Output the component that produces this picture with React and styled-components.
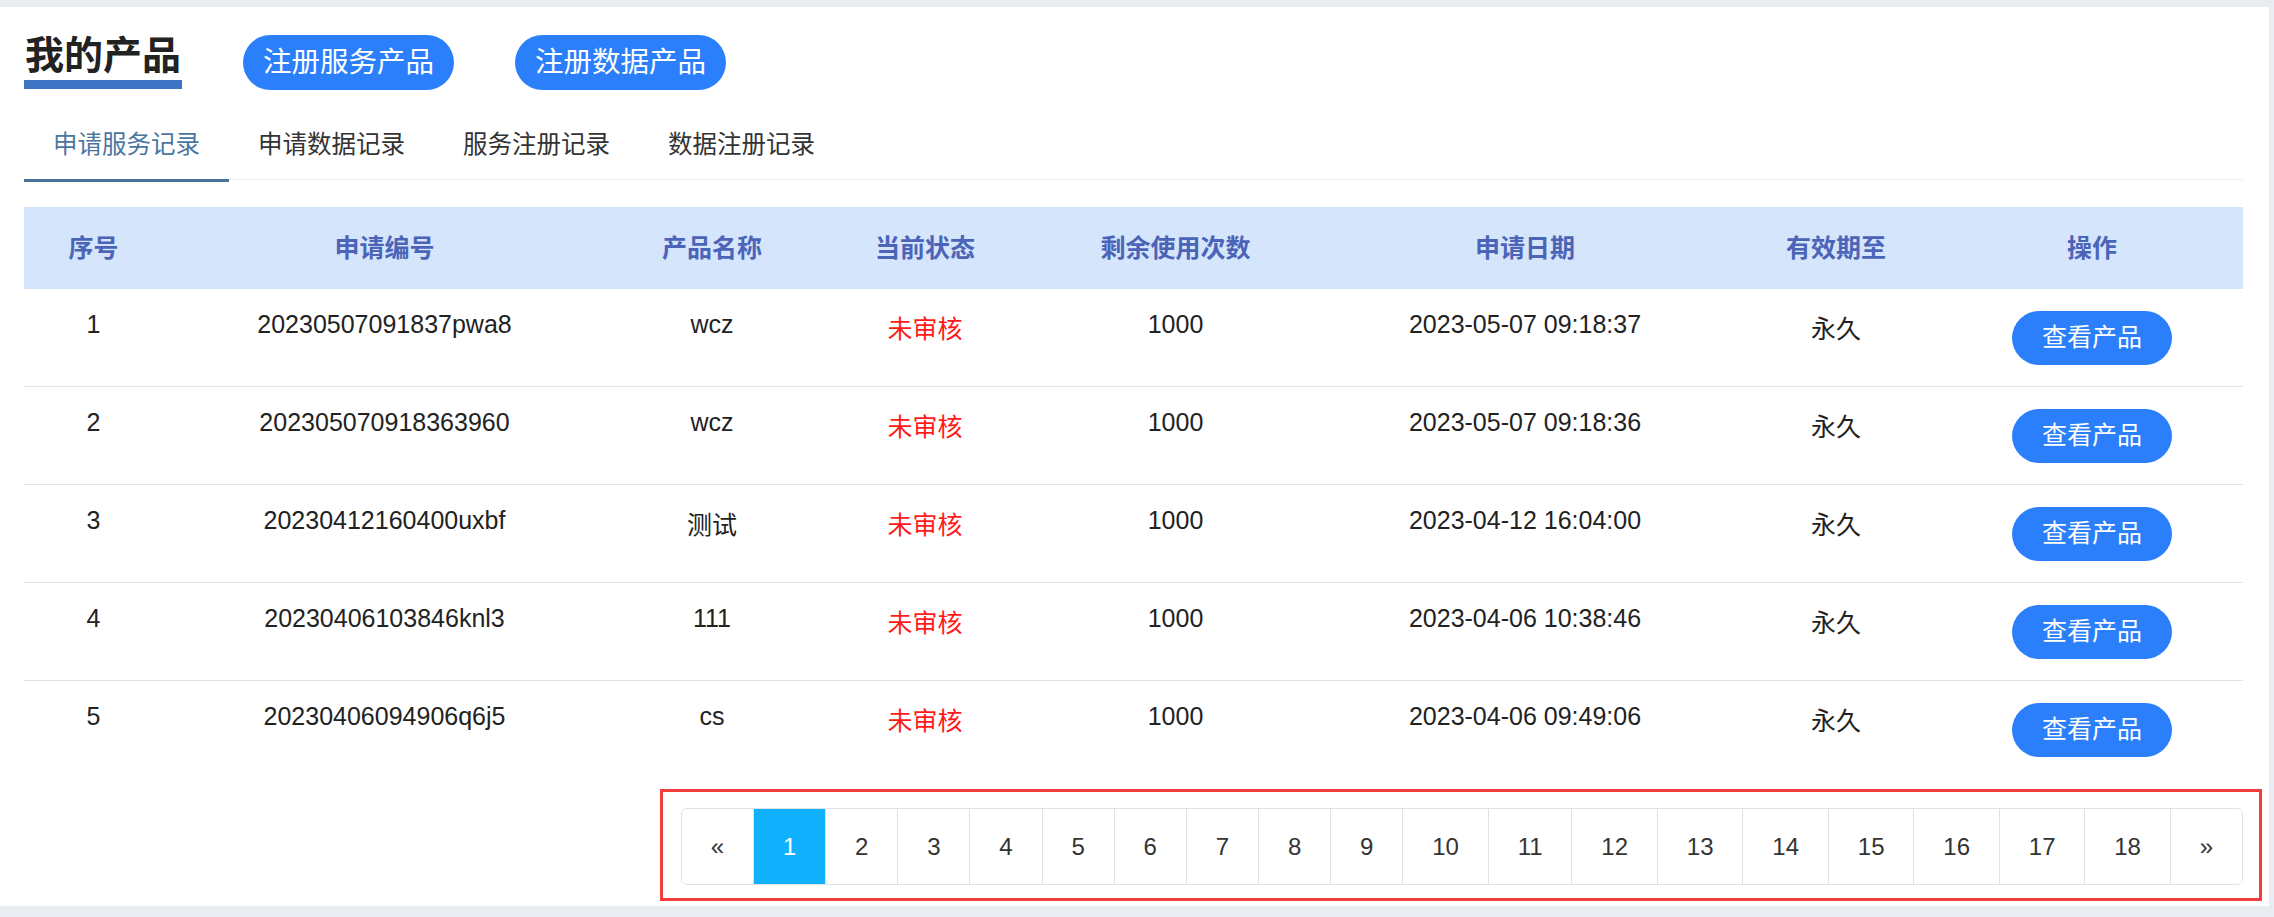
import React from "react";
import styled, { createGlobalStyle } from "styled-components";

const GlobalStyle = createGlobalStyle`
  html, body {
    margin: 0;
    padding: 0;
  }
  body {
    background: #e9ecf1;
    font-family: "Liberation Sans", "Noto Sans CJK SC", sans-serif;
    color: #222;
  }
`;

const Page = styled.div`
  padding: 7px 5px 0 0;
`;

const Panel = styled.section`
  background: #fff;
  height: 899px;
  box-sizing: border-box;
  padding: 28px 26px 0 24px;
  display: flex;
  flex-direction: column;
`;

const TopBar = styled.div`
  display: flex;
  align-items: flex-start;
  gap: 61px;
`;

const Title = styled.h1`
  margin: 0;
  padding: 3px 1px 6px;
  font-size: 39px;
  font-weight: 700;
  line-height: 36px;
  color: #222;
  border-bottom: 9px solid #3d74c4;
`;

const PillButton = styled.button`
  border: none;
  background: #2b7ffa;
  color: #fff;
  font-family: inherit;
  cursor: pointer;
  height: ${(p) => (p.$big ? 55 : 54)}px;
  padding: 0 ${(p) => (p.$big ? 20 : 30)}px;
  font-size: ${(p) => (p.$big ? 28.5 : 25)}px;
  border-radius: 28px;
  line-height: 1;
`;

const Tabs = styled.nav`
  display: flex;
  margin-top: 20px;
  border-bottom: 1px solid #eceef1;
`;

const Tab = styled.div`
  padding: 17px 29px 16px;
  margin-bottom: -3px;
  font-size: 24.5px;
  line-height: 36px;
  cursor: pointer;
  color: ${(p) => (p.$active ? "#4b76a0" : "#333")};
  border-bottom: 3px solid ${(p) => (p.$active ? "#4a7499" : "transparent")};
`;

const Table = styled.div`
  margin-top: 27px;
`;

const cols = "139fr 443fr 212fr 214fr 287fr 412fr 210fr 302fr";

const HeadRow = styled.div`
  display: grid;
  grid-template-columns: ${cols};
  height: 82px;
  align-items: center;
  background: #d4e5fc;
`;

const HeadCell = styled.div`
  text-align: center;
  font-size: 25px;
  font-weight: 700;
  line-height: 36px;
  color: #4b64b8;
`;

const BodyRow = styled.div`
  display: grid;
  grid-template-columns: ${cols};
  height: 97px;
  border-bottom: 1px solid #e0e3e8;

  &:last-child {
    border-bottom: none;
  }
`;

const Cell = styled.div`
  display: flex;
  justify-content: center;
  align-items: flex-start;
  padding-top: ${(p) => (p.$han ? 22 : 17)}px;
  font-size: 25px;
  line-height: 36px;
  color: ${(p) => (p.$status ? "#ff1a1a" : "#222")};
`;

const ActionCell = styled.div`
  display: flex;
  justify-content: center;
  align-items: center;
`;

const Footer = styled.div`
  display: flex;
  justify-content: flex-end;
  margin-top: 11px;
`;

const Highlight = styled.div`
  border: 3px solid #f23b3b;
  padding: 16px 16px 13px 18px;
  margin-right: -19px;
`;

const Pager = styled.ul`
  display: flex;
  margin: 0;
  padding: 0;
  list-style: none;
  height: 77px;
  box-sizing: border-box;
  border: 1px solid #dee2e6;
  border-radius: 6px;
  overflow: hidden;
`;

const PageItem = styled.li`
  display: flex;
  align-items: center;
  padding: 0 28.9px;
  font-size: 24px;
  cursor: pointer;
  border-left: 1px solid #dee2e6;
  color: ${(p) => (p.$active ? "#fff" : "#333")};
  background: ${(p) => (p.$active ? "#12b1fd" : "#fff")};

  &:first-child {
    border-left: none;
  }
`;

const headers = ["序号", "申请编号", "产品名称", "当前状态", "剩余使用次数", "申请日期", "有效期至", "操作"];

const records = [
  { no: 1, code: "20230507091837pwa8", name: "wcz", date: "2023-05-07 09:18:37" },
  { no: 2, code: "202305070918363960", name: "wcz", date: "2023-05-07 09:18:36" },
  { no: 3, code: "20230412160400uxbf", name: "测试", date: "2023-04-12 16:04:00" },
  { no: 4, code: "20230406103846knl3", name: "111", date: "2023-04-06 10:38:46" },
  { no: 5, code: "20230406094906q6j5", name: "cs", date: "2023-04-06 09:49:06" },
];

const tabs = ["申请服务记录", "申请数据记录", "服务注册记录", "数据注册记录"];

const hasHan = (s) => /[\u4e00-\u9fff]/.test(s);

const pages = ["«", ...Array.from({ length: 18 }, (_, i) => String(i + 1)), "»"];

const App = () => {
  return (
    <>
      <GlobalStyle />
      <Page>
        <Panel>
          <TopBar>
            <Title>我的产品</Title>
            <PillButton $big>注册服务产品</PillButton>
            <PillButton $big>注册数据产品</PillButton>
          </TopBar>

          <Tabs>
            {tabs.map((t, i) => (
              <Tab key={t} $active={i === 0}>
                {t}
              </Tab>
            ))}
          </Tabs>

          <Table>
            <HeadRow>
              {headers.map((h) => (
                <HeadCell key={h}>{h}</HeadCell>
              ))}
            </HeadRow>
            {records.map((r) => (
              <BodyRow key={r.no}>
                <Cell>{r.no}</Cell>
                <Cell>{r.code}</Cell>
                <Cell $han={hasHan(r.name)}>{r.name}</Cell>
                <Cell $han $status>
                  未审核
                </Cell>
                <Cell>1000</Cell>
                <Cell>{r.date}</Cell>
                <Cell $han>永久</Cell>
                <ActionCell>
                  <PillButton>查看产品</PillButton>
                </ActionCell>
              </BodyRow>
            ))}
          </Table>

          <Footer>
            <Highlight>
              <Pager>
                {pages.map((p) => (
                  <PageItem key={p} $active={p === "1"}>
                    {p}
                  </PageItem>
                ))}
              </Pager>
            </Highlight>
          </Footer>
        </Panel>
      </Page>
    </>
  );
};

export default App;
